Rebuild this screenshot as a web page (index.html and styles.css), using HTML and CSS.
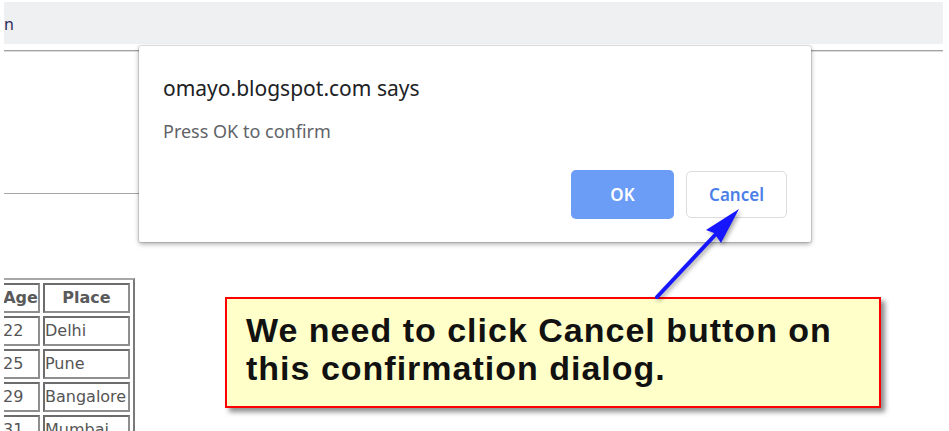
FILE: index.html
```html
<!DOCTYPE html>
<html lang="en">
<head>
<meta charset="utf-8">
<title>omayo confirm dialog</title>
<link rel="stylesheet" href="styles.css">
</head>
<body>
<div class="screen">
  <div class="page">
    <div class="topbar"><span class="crumb">n</span></div>
    <div class="toolbar-rule"></div>
    <div class="page-rule"></div>
    <table class="people">
      <tr><th class="age">Age</th><th class="place">Place</th></tr>
      <tr><td class="age">22</td><td class="place">Delhi</td></tr>
      <tr><td class="age">25</td><td class="place">Pune</td></tr>
      <tr><td class="age">29</td><td class="place">Bangalore</td></tr>
      <tr><td class="age">31</td><td class="place">Mumbai</td></tr>
    </table>
  </div>

  <div class="dialog">
    <div class="dialog-title">omayo.blogspot.com says</div>
    <div class="dialog-msg">Press OK to confirm</div>
    <div class="dialog-actions">
      <button class="btn btn-ok">OK</button>
      <button class="btn btn-cancel">Cancel</button>
    </div>
  </div>

  <div class="callout">We need to click Cancel button on<br>this confirmation dialog.</div>

  <svg class="arrow" width="949" height="431" viewBox="0 0 949 431" xmlns="http://www.w3.org/2000/svg">
    <line x1="657" y1="297" x2="716" y2="234" stroke="#1616ff" stroke-width="4" stroke-linecap="round"/>
    <polygon points="739,209 706,230 714,233 721,243" fill="#1616ff"/>
  </svg>
</div>
</body>
</html>
```
FILE: styles.css
```css
html, body {
  margin: 0;
  padding: 0;
  background: #ffffff;
}

.screen {
  position: relative;
  width: 949px;
  height: 431px;
  overflow: hidden;
  padding-left: 4px;
  box-sizing: border-box;
  background: #ffffff;
}

.page {
  width: 939px;
  height: 431px;
  overflow: hidden;
}

.topbar {
  margin-top: 2px;
  height: 42px;
  background: #eff0f2;
  font-family: "Noto Sans", sans-serif;
  font-size: 16px;
  line-height: 22px;
  padding-top: 11px;
  box-sizing: border-box;
}

.crumb {
  color: #2f2c5c;
}

.toolbar-rule {
  margin-top: 6px;
  height: 0;
  border-top: 1px solid #a3a3a3;
  border-bottom: 1px solid #dcdcdc;
}

.page-rule {
  margin-top: 141px;
  width: 320px;
  height: 1px;
  background: #a6a6a6;
}

.people {
  margin-top: 84px;
  margin-left: -8px;
  border-collapse: separate;
  border-spacing: 3px;
  border: 2px solid;
  border-color: #a8a8a8 #7a7a7a #7a7a7a #a8a8a8;
  font-family: "DejaVu Sans", sans-serif;
  font-size: 16px;
  color: #555555;
}

.people th,
.people td {
  border: 2px solid;
  border-color: #6c6c6c #8e8e8e #8e8e8e #6c6c6c;
  padding: 0;
  line-height: 26px;
  white-space: nowrap;
}

.people th {
  font-weight: bold;
  text-align: center;
  color: #5a5a5a;
}

.people td {
  text-align: left;
}

.people .age {
  width: 35px;
}

.people .place {
  width: 83px;
}

/* dialog overlay */
.dialog {
  position: absolute;
  left: 139px;
  top: 46px;
  width: 672px;
  height: 196px;
  box-sizing: border-box;
  padding: 28px 24px 23px 24px;
  background: #ffffff;
  border-radius: 2px;
  box-shadow: 0 0 0 1px rgba(0, 0, 0, 0.10), 0 2px 5px rgba(0, 0, 0, 0.35);
  display: flex;
  flex-direction: column;
  font-family: "Noto Sans", sans-serif;
}

.dialog-title {
  font-size: 21px;
  line-height: 28px;
  color: #202124;
}

.dialog-msg {
  margin-top: 17px;
  font-size: 18px;
  line-height: 24px;
  color: #5f6368;
}

.dialog-actions {
  margin-top: auto;
  display: flex;
  justify-content: flex-end;
  align-items: center;
  gap: 12px;
}

.btn {
  font-family: "Noto Sans", sans-serif;
  font-size: 17px;
  font-weight: 600;
  border-radius: 5px;
  padding: 0;
  cursor: default;
}

.btn-ok {
  width: 103px;
  height: 49px;
  background: #6b9cf6;
  color: #ffffff;
  border: none;
}

.btn-cancel {
  width: 101px;
  height: 47px;
  background: #ffffff;
  color: #4c7fe8;
  border: 1px solid #dadce0;
}

/* annotation callout */
.callout {
  position: absolute;
  left: 225px;
  top: 297px;
  width: 656px;
  height: 111px;
  box-sizing: border-box;
  padding: 12px 0 0 19px;
  background: #ffffc9;
  border: 2px solid #ff0000;
  box-shadow: 4px 4px 5px rgba(0, 0, 0, 0.45);
  font-family: "Liberation Sans", Arial, sans-serif;
  font-weight: bold;
  font-size: 34px;
  line-height: 38px;
  letter-spacing: 1px;
  color: #111111;
}

.arrow {
  position: absolute;
  left: 0;
  top: 0;
  pointer-events: none;
  filter: drop-shadow(2px 2px 2px rgba(0, 0, 0, 0.35));
}
```
